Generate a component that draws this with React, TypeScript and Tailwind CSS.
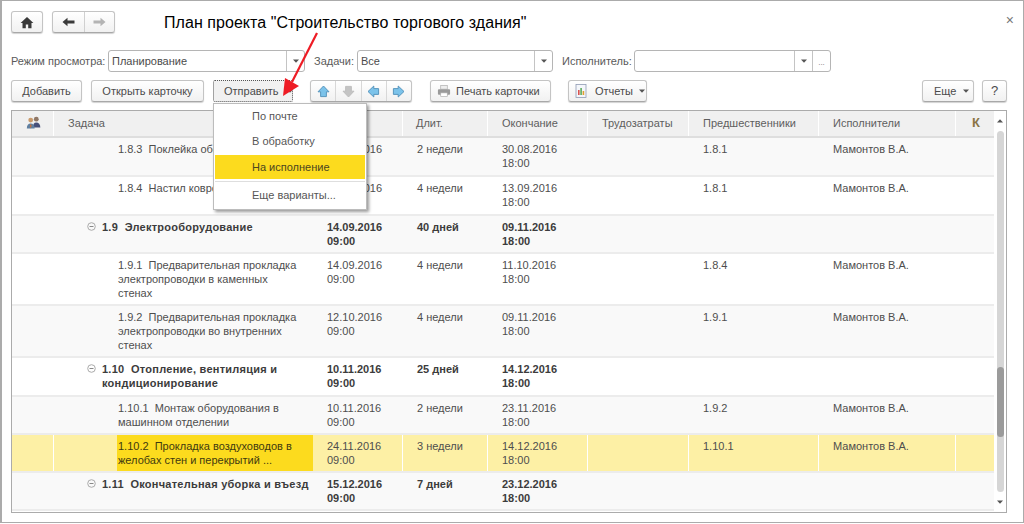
import type { ReactNode } from "react"

const font = { fontFamily: '"Liberation Sans", Arial, sans-serif' }

const btn =
  "flex h-[22px] items-center justify-center rounded-[3px] border border-[#c4c4c4] border-b-[#a8a8a8] bg-gradient-to-b from-white to-[#f1f1f1] text-[11px] text-[#4b4b4b] shadow-[0_1px_1px_rgba(0,0,0,0.18)]"

const Caret = ({ color = "#555", className = "" }: { color?: string; className?: string }) => (
  <svg width="6" height="4" viewBox="0 0 6 4" className={`shrink-0 ${className}`}>
    <path d="M0 0.5h6L3 3.8z" fill={color} />
  </svg>
)

const ArrowIcon = ({ dir, fill, stroke }: { dir: "up" | "down" | "left" | "right"; fill: string; stroke: string }) => {
  const rot = { up: 0, right: 90, down: 180, left: 270 }[dir]
  return (
    <svg width="13" height="13" viewBox="0 0 13 13">
      <g transform={`rotate(${rot} 6.5 6.5)`}>
        <path d="M6.5 1L12 6.8H9.4V11.6H3.6V6.8H1z" fill={fill} stroke={stroke} strokeWidth="0.9" />
      </g>
    </svg>
  )
}

const Field = ({ label, labelW, value, w, more }: { label: string; labelW: string; value: string; w: string; more?: boolean }) => (
  <div className="flex items-center">
    <span className={`text-[11px] text-[#5a5a5a] ${labelW}`}>{label}</span>
    <div className={`flex h-[22px] items-stretch rounded-[3px] border border-[#b5b5b5] bg-white ${w}`}>
      <span className="flex-1 truncate pl-[3px] text-[11px] leading-[20px] text-[#4b4b4b]">{value}</span>
      <span className="flex w-[18px] items-center justify-center border-l border-[#c4c4c4]">
        <Caret />
      </span>
      {more && (
        <span className="flex w-[18px] items-center justify-center border-l border-[#c4c4c4] pt-[3px] text-[8px] text-[#777]">
          ...
        </span>
      )}
    </div>
  </div>
)

const cols = "grid grid-cols-[42px_259px_90px_85px_100px_101px_130px_137px_39px]"

const heads = ["", "Задача", "", "Длит.", "Окончание", "Трудозатраты", "Предшественники", "Исполнители", ""]

type Row = {
  h: string
  indent: string
  task: ReactNode
  start: string[]
  dur: string
  end: string[]
  pred?: string
  who?: string
  bold?: boolean
  bg: string
  active?: boolean
}

const rows: Row[] = [
  { h: "h-[39px]", indent: "pl-[64px]", task: "1.8.3  Поклейка обоев", start: ["30.08.2016", "09:00"], dur: "2 недели", end: ["30.08.2016", "18:00"], pred: "1.8.1", who: "Мамонтов В.А.", bg: "bg-[#f9f9f9]" },
  { h: "h-[39px]", indent: "pl-[64px]", task: "1.8.4  Настил ковролина", start: ["31.08.2016", "09:00"], dur: "4 недели", end: ["13.09.2016", "18:00"], pred: "1.8.1", who: "Мамонтов В.А.", bg: "bg-white" },
  { h: "h-[38px]", indent: "pl-[48px]", task: "1.9  Электрооборудование", start: ["14.09.2016", "09:00"], dur: "40 дней", end: ["09.11.2016", "18:00"], bold: true, bg: "bg-[#f9f9f9]" },
  { h: "h-[52px]", indent: "pl-[64px]", task: "1.9.1  Предварительная прокладка электропроводки в каменных стенах", start: ["14.09.2016", "09:00"], dur: "4 недели", end: ["11.10.2016", "18:00"], pred: "1.8.4", who: "Мамонтов В.А.", bg: "bg-white" },
  { h: "h-[52px]", indent: "pl-[64px]", task: "1.9.2  Предварительная прокладка электропроводки во внутренних стенах", start: ["12.10.2016", "09:00"], dur: "4 недели", end: ["09.11.2016", "18:00"], pred: "1.9.1", who: "Мамонтов В.А.", bg: "bg-[#f9f9f9]" },
  { h: "h-[39px]", indent: "pl-[48px]", task: "1.10  Отопление, вентиляция и кондиционирование", start: ["10.11.2016", "09:00"], dur: "25 дней", end: ["14.12.2016", "18:00"], bold: true, bg: "bg-white" },
  { h: "h-[38px]", indent: "pl-[64px]", task: "1.10.1  Монтаж оборудования в машинном отделении", start: ["10.11.2016", "09:00"], dur: "2 недели", end: ["23.11.2016", "18:00"], pred: "1.9.2", who: "Мамонтов В.А.", bg: "bg-[#f9f9f9]" },
  { h: "h-[38px]", indent: "pl-[64px]", task: "1.10.2  Прокладка воздуховодов в желобах стен и перекрытий ...", start: ["24.11.2016", "09:00"], dur: "3 недели", end: ["14.12.2016", "18:00"], pred: "1.10.1", who: "Мамонтов В.А.", bg: "bg-[#fdf0a5]", active: true },
  { h: "h-[38px]", indent: "pl-[48px]", task: "1.11  Окончательная уборка и въезд", start: ["15.12.2016", "09:00"], dur: "7 дней", end: ["23.12.2016", "18:00"], bold: true, bg: "bg-[#f9f9f9]" },
]

const TwoLines = ({ lines }: { lines: string[] }) => (
  <>
    {lines.map((l) => (
      <div key={l}>{l}</div>
    ))}
  </>
)

const TableRow = ({ r }: { r: Row }) => {
  const sep = r.active ? "border-r border-white" : ""
  const cell = `pl-[14px] pt-[4px] ${sep}`
  return (
    <div className={`${cols} ${r.h} ${r.bg} border-b-2 border-[#ececec] text-[11px] leading-[14px] ${r.bold ? "font-bold text-[#3c3c3c]" : "text-[#4e4e4e]"}`}>
      <div className={sep} />
      <div className={`relative pt-[4px] ${r.bold ? "pr-0 tracking-[0.25px]" : "pr-[12px]"} ${r.indent} ${r.active ? "text-[#3f3a10]" : ""}`}>
        {r.active && <div className="absolute bottom-0 left-[63px] right-0 top-0 bg-[#fcdb1e]" />}
        {r.bold && (
          <svg width="9" height="9" viewBox="0 0 9 9" className="absolute left-[33px] top-[6px]">
            <circle cx="4.5" cy="4.5" r="3.8" fill="none" stroke="#aaa" />
            <path d="M2.5 4.5h4" stroke="#888" />
          </svg>
        )}
        <div className="relative whitespace-pre-wrap">{r.task}</div>
      </div>
      <div className={cell}>
        <TwoLines lines={r.start} />
      </div>
      <div className={`${cell} pl-[13px]`}>{r.dur}</div>
      <div className={cell}>
        <TwoLines lines={r.end} />
      </div>
      <div className={cell} />
      <div className={cell}>{r.pred}</div>
      <div className={cell}>{r.who}</div>
      <div />
    </div>
  )
}

export default function App() {
  return (
    <div style={font} className="relative h-[523px] w-[1024px] overflow-hidden border border-[#ababab] border-l-2 bg-white">
      {/* Top bar */}
      <div className="flex h-[49px] items-start pl-[9px] pt-[10px]">
        <div className={`${btn} w-[32px]`}>
          <svg width="14" height="13" viewBox="0 0 14 13">
            <path d="M7 1L0.6 7H2.5V12.2H5.8V8.6H8.2V12.2H11.5V7H13.4z" fill="#3a3a3a" />
          </svg>
        </div>
        <div className={`${btn} ml-[9px] w-[63px]`}>
          <span className="flex h-full w-[32px] items-center justify-center border-r border-[#d0d0d0]">
            <svg width="13" height="10" viewBox="0 0 13 10">
              <path d="M0.5 5L5.5 0.8V3.6H12.5V6.4H5.5V9.2z" fill="#3a3a3a" />
            </svg>
          </span>
          <span className="flex h-full flex-1 items-center justify-center">
            <svg width="13" height="10" viewBox="0 0 13 10">
              <path d="M12.5 5L7.5 0.8V3.6H0.5V6.4H7.5V9.2z" fill="#b4b4b4" />
            </svg>
          </span>
        </div>
        <div className="ml-[49px] pt-[2px] text-[16px] leading-[20px] tracking-[0.05px] text-black">План проекта "Строительство торгового здания"</div>
        <div className="ml-auto mr-[9px] pt-[2px] text-[14px] leading-[14px] text-[#777]">×</div>
      </div>

      {/* Filters */}
      <div className="flex h-[30px] items-start pl-[9px]">
        <Field label="Режим просмотра:" labelW="w-[97px]" value="Планирование" w="w-[197px]" />
        <div className="ml-[9px]">
          <Field label="Задачи:" labelW="w-[43px]" value="Все" w="w-[196px]" />
        </div>
        <div className="ml-[9px]">
          <Field label="Исполнитель:" labelW="w-[72px]" value="" w="w-[197px]" more />
        </div>
      </div>

      {/* Command bar */}
      <div className="flex h-[30px] items-start pl-[9px] pr-[16px]">
        <div className={`${btn} w-[71px]`}>Добавить</div>
        <div className={`${btn} ml-[9px] w-[113px]`}>Открыть карточку</div>
        <div className="ml-[9px] flex h-[22px] w-[80px] items-center gap-[8px] rounded-[2px] border border-dotted border-[#555] bg-[#f1f1f1] pl-[10px] text-[11px] text-[#4b4b4b]">
          Отправить
          <Caret />
        </div>
        <div className={`${btn} ml-[17px] w-[102px]`}>
          <span className="flex h-full flex-1 items-center justify-center border-r border-[#d8d8d8]">
            <ArrowIcon dir="up" fill="#7cc3ea" stroke="#4f8fb8" />
          </span>
          <span className="flex h-full flex-1 items-center justify-center border-r border-[#d8d8d8]">
            <ArrowIcon dir="down" fill="#c4c4c4" stroke="#bbb" />
          </span>
          <span className="flex h-full flex-1 items-center justify-center border-r border-[#d8d8d8]">
            <ArrowIcon dir="left" fill="#7cc3ea" stroke="#4f8fb8" />
          </span>
          <span className="flex h-full flex-1 items-center justify-center">
            <ArrowIcon dir="right" fill="#7cc3ea" stroke="#4f8fb8" />
          </span>
        </div>
        <div className={`${btn} ml-[18px] w-[121px] justify-start gap-[5px] pl-[6px]`}>
          <svg width="14" height="14" viewBox="0 0 15 14">
            <rect x="4" y="1" width="7" height="4" fill="#eee" stroke="#aaa" strokeWidth="0.7" />
            <rect x="1" y="5" width="13" height="6" rx="1" fill="#9a9a9a" />
            <rect x="4" y="9" width="7" height="4" fill="#fff" stroke="#aaa" strokeWidth="0.7" />
          </svg>
          Печать карточки
        </div>
        <div className={`${btn} ml-[17px] w-[79px] justify-start gap-[8px] pl-[6px]`}>
          <svg width="12" height="14" viewBox="0 0 12 14">
            <rect x="1" y="0.5" width="10" height="13" fill="#f4f6fa" stroke="#8f9bb3" strokeWidth="0.8" />
            <rect x="3" y="6" width="1.6" height="5" fill="#d9534f" />
            <rect x="5.3" y="4" width="1.6" height="7" fill="#5cab5c" />
            <rect x="7.6" y="7" width="1.6" height="4" fill="#e0a030" />
          </svg>
          Отчеты
          <Caret className="-ml-[2px]" />
        </div>
        <div className={`${btn} ml-auto w-[52px] justify-start gap-[7px] pl-[11px]`}>
          Еще
          <Caret />
        </div>
        <div className={`${btn} ml-[8px] w-[25px] text-[13px]`}>?</div>
      </div>

      {/* Table */}
      <div className="relative ml-[9px] h-[403px] w-[996px] overflow-hidden border border-[#ababab]">
        <div className={`${cols} h-[27px] border-b-2 border-[#dedede] bg-[#f0f0f0] text-[11px] leading-[24px] text-[#5e5e5e]`}>
          {heads.map((h, i) => (
            <div key={i} className={`border-r border-white ${i === 3 ? "pl-[13px]" : "pl-[14px]"} ${i === 8 ? "border-r-0" : ""}`}>
              {h}
              {i === 0 && (
                <svg width="15" height="13" viewBox="0 0 16 14" className="mt-[5px]">
                  <circle cx="11" cy="3.4" r="2.6" fill="#8f7766" />
                  <path d="M7.4 12.5c0-3.6 1.2-5.6 3.6-5.6s4.4 1.8 4.4 5.6z" fill="#46507a" />
                  <circle cx="5" cy="4.4" r="2.6" fill="#c99a6b" />
                  <path d="M0.8 13.5c0-3.6 1.6-5.4 4.2-5.4s4.2 1.8 4.2 5.4z" fill="#5f7fa0" />
                  <path d="M5 8.4l-1 2.2 1 2.9 1-2.9z" fill="#c0703f" />
                </svg>
              )}
              {i === 8 && <span className="ml-[2px] text-[13px] font-bold text-[#8a7444]">К</span>}
            </div>
          ))}
        </div>
        {rows.map((r) => (
          <TableRow key={String(r.task)} r={r} />
        ))}

        {/* Scrollbar */}
        <div className="absolute bottom-0 right-0 top-0 flex w-[12px] flex-col items-center bg-white">
          <div className="flex h-[17px] items-center pt-[2px]">
            <svg width="6" height="4" viewBox="0 0 6 4">
              <path d="M0 3.6h6L3 0.2z" fill="#555" />
            </svg>
          </div>
          <div className="relative mt-[3px] h-[361px] w-[7px] rounded-full bg-[#d6d6d6]">
            <div className="absolute left-0 right-0 top-[236px] h-[70px] rounded-full bg-[#9b9b9b]" />
          </div>
          <div className="flex h-[20px] items-center">
            <Caret />
          </div>
        </div>
      </div>

      {/* Send menu */}
      <div className="absolute left-[211px] top-[102px] h-[107px] w-[154px] border border-[#bcbcbc] bg-white text-[11px] text-[#565656] shadow-[2px_2px_3px_rgba(0,0,0,0.4)]">
        <div className="flex h-[25px] items-center pl-[38px]">По почте</div>
        <div className="flex h-[25px] items-center pl-[38px]">В обработку</div>
        <div className="mx-[1px] mt-[1px] flex h-[24px] items-center bg-[#fcdb1e] pl-[37px] text-[#4a4520]">На исполнение</div>
        <div className="mx-[1px] mt-[2px] border-t border-[#dedede]" />
        <div className="flex h-[27px] items-center pl-[38px]">Еще варианты...</div>
      </div>

      {/* Red annotation arrow */}
      <svg width="50" height="80" viewBox="0 0 50 80" className="absolute left-[273px] top-[28px]">
        <path d="M42 4L17 53" stroke="#ee1c25" strokeWidth="2.2" fill="none" />
        <path d="M8 67L10 49L24 57z" fill="#ee1c25" />
      </svg>
    </div>
  )
}
